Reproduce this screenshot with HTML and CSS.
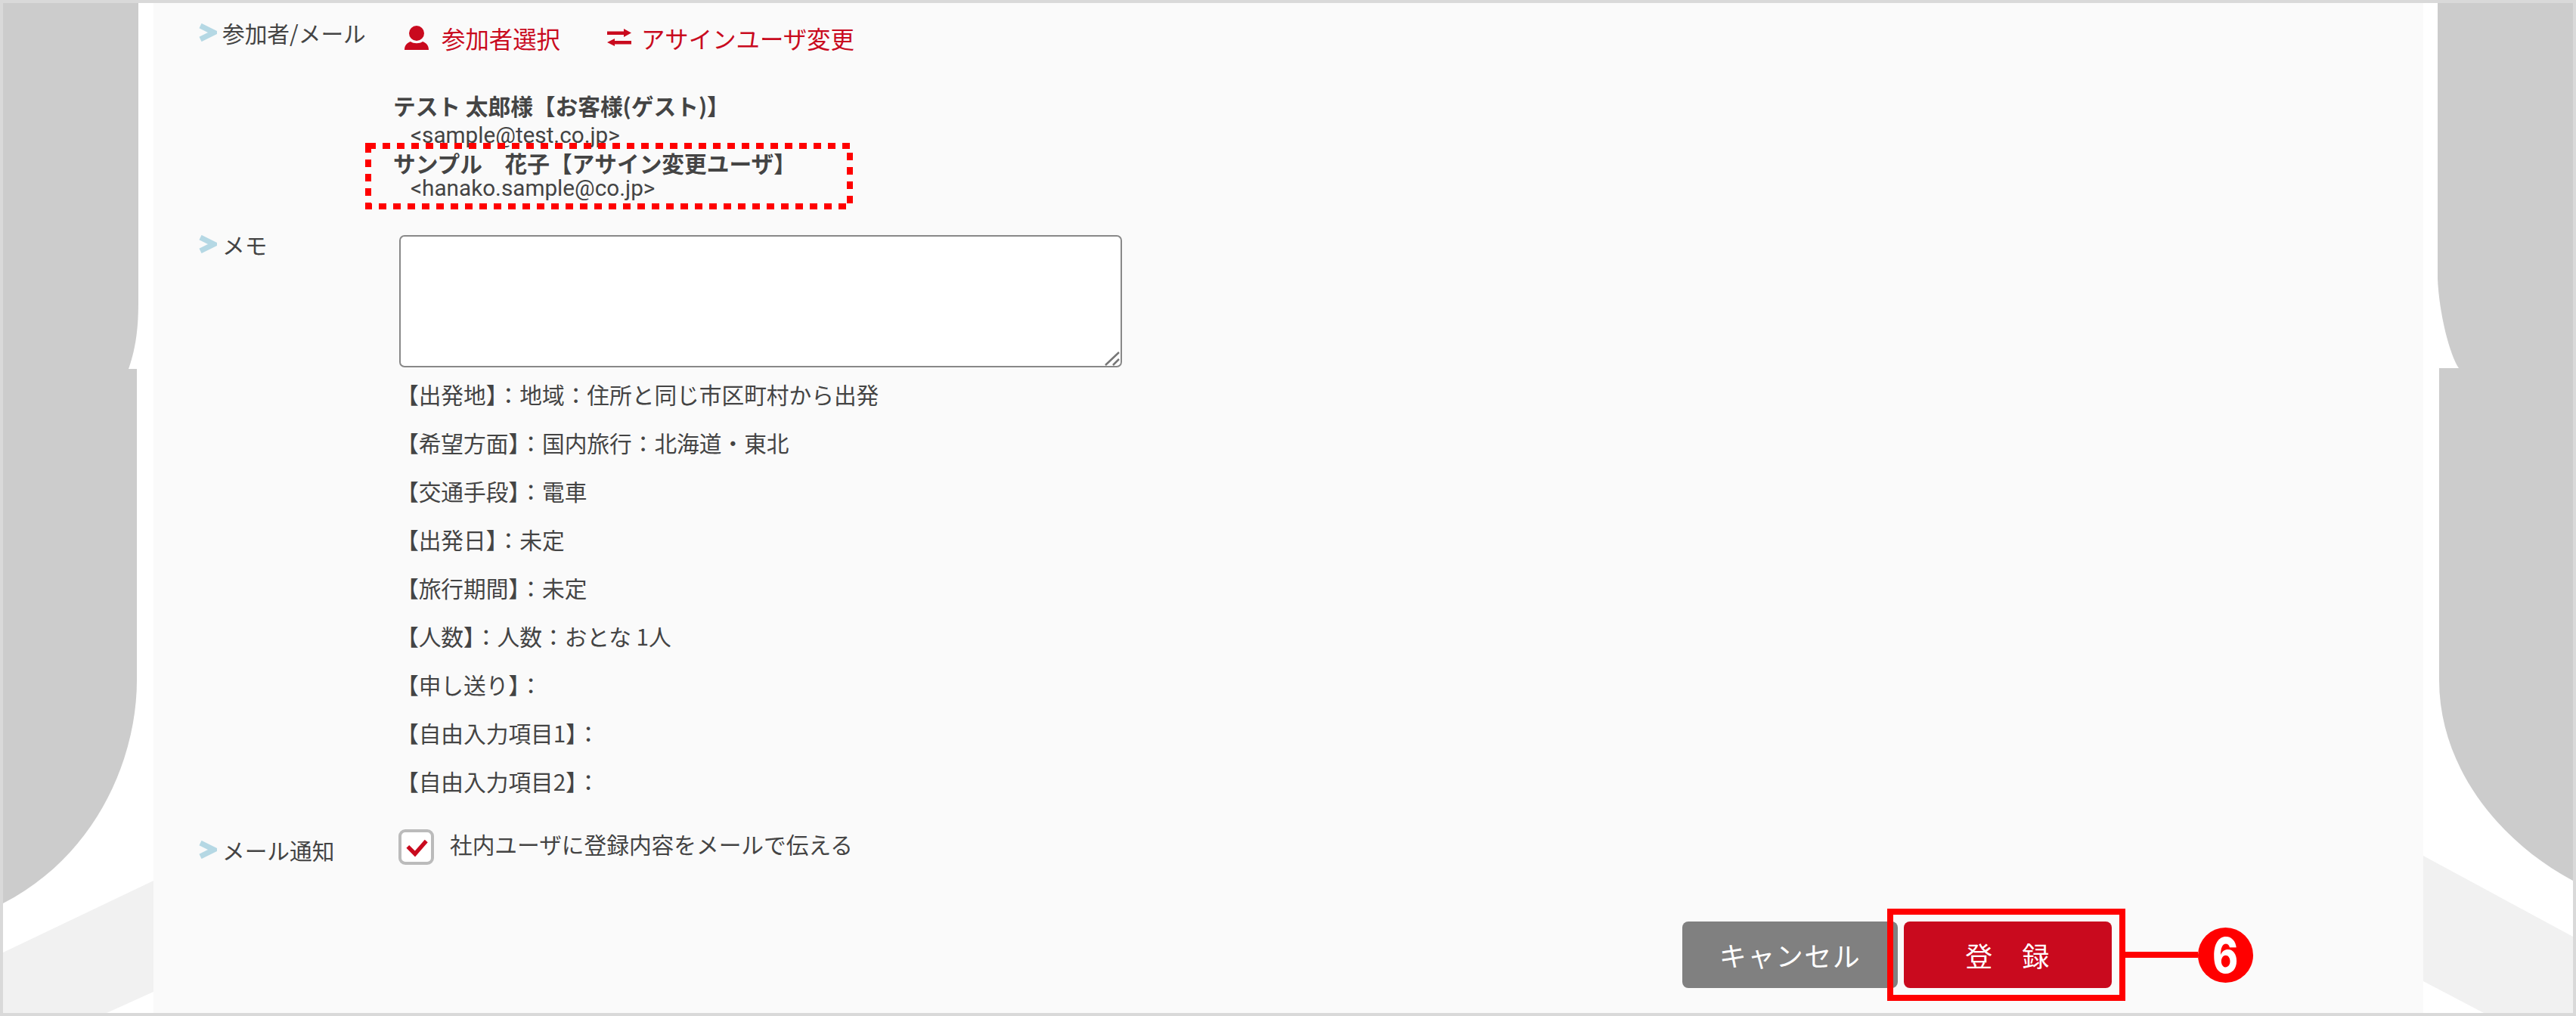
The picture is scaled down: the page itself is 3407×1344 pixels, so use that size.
FILE: index.html
```html
<!DOCTYPE html>
<html lang="ja">
<head>
  <meta charset="UTF-8">
  <title>参加者/メール</title>
  <link rel="stylesheet" href="styles.css">
</head>
<body>
  <div class="page">
    <svg class="backdrop" viewBox="4 4 3399 1336" width="3399" height="1336">
      <path class="shade" d="M4 4H183V400C183 440 178 465 170 488H4Z"/>
      <path class="shade" d="M4 488H181V900C181 1000 130 1130 4 1195Z"/>
      <path class="shade" d="M3224 4V369C3226 415 3240 470 3252 487H3403V4Z"/>
      <path class="shade" d="M3226 487H3403V1165C3300 1110 3226 1010 3226 900Z"/>
      <path class="band" d="M4 1260L203 1165V1312L141 1340H4Z"/>
      <path class="band" d="M3205 1132L3403 1239V1340H3285L3205 1298Z"/>
    </svg>

    <div class="panel">
      <div class="row row-people">
        <div class="label">
          <svg class="chevron" viewBox="0 0 24 24"><path d="M2 3L20 12L2 21"/></svg>
          <span>参加者/メール</span>
        </div>
        <div class="value">
          <div class="links">
            <a class="link">
              <svg class="icon-user" viewBox="0 0 32 32"><circle cx="16" cy="10" r="10"/><path d="M0 32C0 26 3 23 8 21C12 24 20 24 24 21C29 23 32 26 32 32Z"/></svg>
              <span>参加者選択</span>
            </a>
            <a class="link">
              <svg class="icon-swap" viewBox="0 0 32 24"><path d="M0 3.500H22V0L32 5.500L22 11V8H0Z"/><path d="M32 16H10V13L0 18L10 23V20.500H32Z"/></svg>
              <span>アサインユーザ変更</span>
            </a>
          </div>
          <div class="person">
            <div class="person-name">テスト 太郎様【お客様(ゲスト)】</div>
            <div class="person-mail first">&lt;sample@test.co.jp&gt;</div>
          </div>
          <div class="person changed">
            <div class="person-name">サンプル　花子【アサイン変更ユーザ】</div>
            <div class="person-mail">&lt;hanako.sample@co.jp&gt;</div>
            <svg class="dash-box" width="645" height="88" viewBox="0 0 645 88"><rect x="4" y="4" width="637" height="80"/></svg>
          </div>
        </div>
      </div>

      <div class="row row-memo">
        <div class="label">
          <svg class="chevron" viewBox="0 0 24 24"><path d="M2 3L20 12L2 21"/></svg>
          <span>メモ</span>
        </div>
        <div class="value">
          <div class="memo-wrap">
            <textarea class="memo"></textarea>
            <svg class="grip" viewBox="0 0 24 24"><path d="M2 21L20 4M12 21L20 13"/></svg>
          </div>
          <div class="notes">
            <p>【出発地】：地域：住所と同じ市区町村から出発</p>
            <p>【希望方面】：国内旅行：北海道・東北</p>
            <p>【交通手段】：電車</p>
            <p>【出発日】：未定</p>
            <p>【旅行期間】：未定</p>
            <p>【人数】：人数：おとな 1人</p>
            <p>【申し送り】：</p>
            <p>【自由入力項目1】：</p>
            <p>【自由入力項目2】：</p>
          </div>
        </div>
      </div>

      <div class="row row-notify">
        <div class="label">
          <svg class="chevron" viewBox="0 0 24 24"><path d="M2 3L20 12L2 21"/></svg>
          <span>メール通知</span>
        </div>
        <div class="value check-line">
          <span class="check">
            <svg viewBox="0 0 32 32"><path d="M5 15L14 24L28 8"/></svg>
          </span>
          <span>社内ユーザに登録内容をメールで伝える</span>
        </div>
      </div>

      <div class="actions">
        <button class="btn btn-cancel">キャンセル</button>
        <button class="btn btn-save">登　録</button>
      </div>
    </div>

    <div class="callout-box"></div>
    <div class="callout-line"></div>
    <div class="callout-num"><span>6</span></div>
  </div>
</body>
</html>
```

FILE: styles.css
```css
* {
  box-sizing: border-box;
  font-family: "Noto Sans CJK JP", "Noto Sans", sans-serif;
}

body {
  margin: 0;
  background: #fff;
}

.page {
  position: relative;
  width: 3407px;
  height: 1344px;
  background: #fff;
  border: 4px solid #d9d9d9;
  overflow: hidden;
  color: #444;
  font-size: 29.7px;
}

.backdrop {
  position: absolute;
  top: 0;
  left: 0;
}

.shade {
  fill: #ccc;
}

.band {
  fill: #f1f1f1;
}

.panel {
  position: relative;
  width: 3002px;
  height: 100%;
  margin-left: 199px;
  padding: 19px 0 0 60px;
  background: #fafafa;
}

.row {
  display: flex;
}

.label {
  display: flex;
  align-items: center;
  gap: 7px;
  width: 265px;
  height: 40px;
  flex-shrink: 0;
}

.chevron {
  width: 24px;
  height: 24px;
  fill: none;
  stroke: #b5d8e4;
  stroke-width: 7;
}

.links {
  display: flex;
  align-items: center;
  gap: 62px;
  height: 40px;
  margin: 7px 0 0 7px;
  font-size: 31.4px;
  color: #c90a1e;
}

.link {
  display: flex;
  align-items: center;
}

.icon-user {
  width: 32px;
  height: 32px;
  margin-right: 17px;
  fill: #c90a1e;
}

.icon-swap {
  width: 32px;
  height: 24px;
  margin-right: 13px;
  fill: #c90a1e;
}

.person {
  position: relative;
  margin-left: -8px;
}

.person-name {
  height: 32px;
  line-height: 33px;
  font-weight: 700;
  white-space: nowrap;
}

.person-mail {
  height: 32px;
  line-height: 35px;
  margin-left: 23px;
  font-family: Roboto, sans-serif;
  font-size: 29.7px;
}

.row-people .links {
  margin-bottom: 53px;
}

.person-mail.first {
  margin-top: 6px;
}

.changed {
  margin-top: 6px;
}

.dash-box {
  position: absolute;
  top: -10px;
  left: -37px;
}

.dash-box rect {
  fill: none;
  stroke: #f00;
  stroke-width: 8;
  stroke-dasharray: 10 9;
}

.row-memo {
  margin-top: 48px;
}

.row-memo .label {
  margin-top: -8px;
}

.memo-wrap {
  position: relative;
  width: 956px;
  height: 175px;
}

.memo {
  display: block;
  width: 100%;
  height: 100%;
  background: #fff;
  border: 2px solid #888;
  border-radius: 7px;
  resize: none;
}

.grip {
  position: absolute;
  right: 0;
  bottom: 0;
  width: 24px;
  height: 24px;
  fill: none;
  stroke: #777;
  stroke-width: 2.500;
}

.notes {
  margin: 4px 0 0 -4px;
}

.notes p {
  margin: 0;
  height: 64px;
  line-height: 64px;
  white-space: nowrap;
}

.row-notify {
  margin-top: 31px;
}

.row-notify .label {
  margin-top: 7px;
}

.check-line {
  display: flex;
  align-items: flex-start;
  gap: 21px;
  margin-left: -1px;
}

.check-line > span:last-child {
  line-height: 40px;
}

.check {
  display: flex;
  align-items: center;
  justify-content: center;
  width: 47px;
  height: 47px;
  background: #fff;
  border: 4px solid #bbb;
  border-radius: 9px;
}

.check svg {
  width: 34px;
  height: 34px;
  fill: none;
  stroke: #c90a1e;
  stroke-width: 5;
}

.actions {
  display: flex;
  justify-content: flex-end;
  gap: 8px;
  margin-top: 75px;
  padding-right: 412px;
}

.btn {
  height: 88px;
  border: 0;
  border-radius: 8px;
  color: #fff;
  font-size: 36px;
  letter-spacing: 1.500px;
}

.btn-cancel {
  width: 285px;
  background: #808080;
}

.btn-save {
  width: 275px;
  background: #c90a1e;
}

.callout-box {
  position: absolute;
  top: 1198px;
  left: 2492px;
  width: 315px;
  height: 122px;
  border: 8px solid #f00;
}

.callout-line {
  position: absolute;
  top: 1255px;
  left: 2807px;
  width: 96px;
  height: 8px;
  background: #f00;
}

.callout-num {
  position: absolute;
  top: 1223px;
  left: 2903px;
  width: 73px;
  height: 73px;
  border-radius: 50%;
  background: #f00;
  color: #fff;
  font-family: "Inter", sans-serif;
  font-size: 64px;
  font-weight: 800;
  line-height: 73px;
  text-align: center;
}

.callout-num span {
  display: inline-block;
  font-family: inherit;
  transform: scaleX(0.8);
}
```
